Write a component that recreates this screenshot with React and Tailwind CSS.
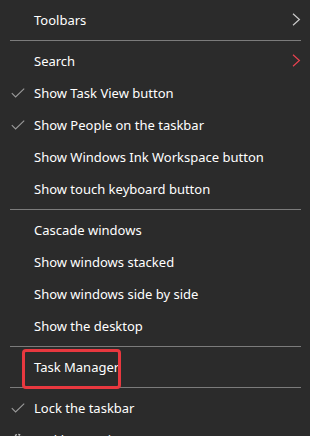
import React from "react";

const Check = () => (
  <svg width="14" height="10" viewBox="0 0 14 10" className="absolute left-[11px] top-[12px]">
    <path d="M0.8 5.2 L4.6 9 L13.2 0.6" fill="none" stroke="#9a9a9a" strokeWidth="1.1" />
  </svg>
);

const Chevron = ({ color }) => (
  <svg width="9" height="13" viewBox="0 0 9 13" className="absolute left-[292px] top-[10px]">
    <path d="M1 0.8 L7.4 6.5 L1 12.2" fill="none" stroke={color} strokeWidth="1.2" />
  </svg>
);

const Gear = () => (
  <svg width="14" height="14" viewBox="0 0 14 14" className="absolute left-[11px] top-[9px]">
    <circle cx="7" cy="7" r="4.5" fill="none" stroke="#cfcfcf" strokeWidth="1.4" strokeDasharray="2 1.5" />
    <circle cx="7" cy="7" r="2" fill="none" stroke="#cfcfcf" strokeWidth="1" />
  </svg>
);

const Row = ({ label, check, chevron, gear }) => (
  <div className="relative h-[32px] flex items-center pl-[34px] text-white">
    {check && <Check />}
    {gear && <Gear />}
    <span className="pt-[2px]">{label}</span>
    {chevron && <Chevron color={chevron} />}
  </div>
);

const Sep = () => (
  <div className="h-[9px] pt-[5px]">
    <div className="ml-[10px] w-[291px] h-px bg-[#7b7b7b]" />
  </div>
);

export default function App() {
  return (
    <div
      className="relative w-[310px] h-[436px] overflow-hidden bg-[#2b2b2b] pt-[3px] text-[13px] leading-none"
      style={{ fontFamily: '"Noto Sans", "Open Sans", sans-serif' }}
    >
      <Row label="Toolbars" chevron="#c9c9c9" />
      <Sep />
      <Row label="Search" chevron="#e8414f" />
      <Row label="Show Task View button" check />
      <Row label="Show People on the taskbar" check />
      <Row label="Show Windows Ink Workspace button" />
      <Row label="Show touch keyboard button" />
      <Sep />
      <Row label="Cascade windows" />
      <Row label="Show windows stacked" />
      <Row label="Show windows side by side" />
      <Row label="Show the desktop" />
      <Sep />
      <Row label="Task Manager" />
      <Sep />
      <Row label="Lock the taskbar" check />
      <Row label="Taskbar settings" gear />
      <div className="absolute left-[22px] top-[349px] w-[99px] h-[40px] border-[3px] border-[#e8383f] rounded-[4px]" />
    </div>
  );
}
